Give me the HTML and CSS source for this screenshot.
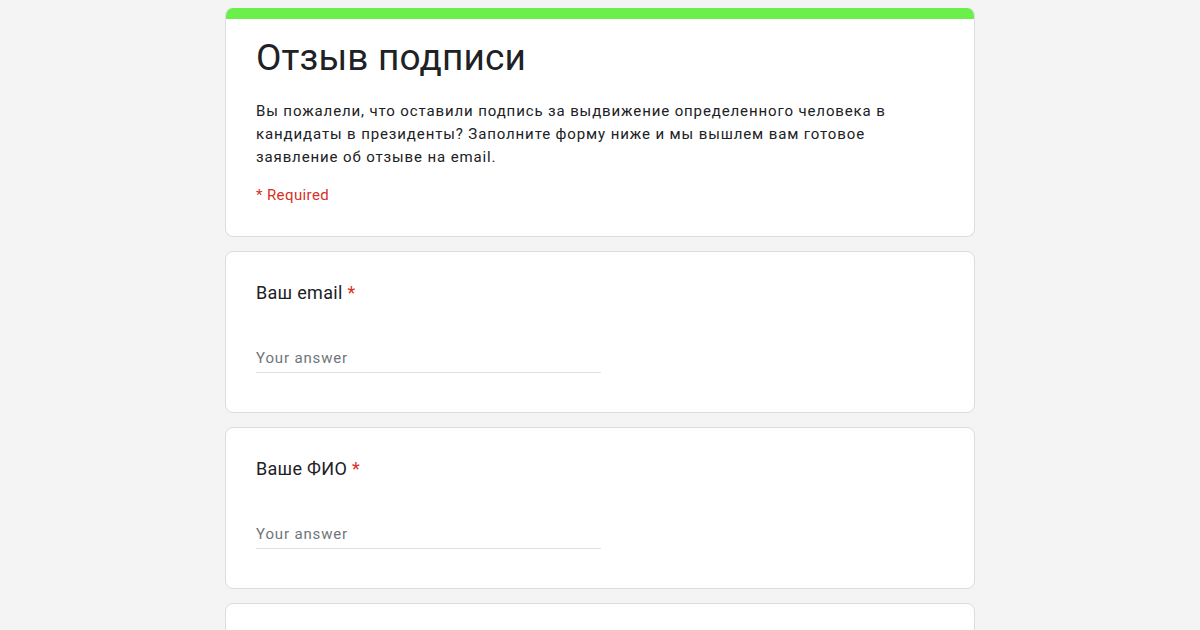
FILE: index.html
```html
<!DOCTYPE html>
<html lang="ru">
<head>
<meta charset="utf-8">
<title>Отзыв подписи</title>
<link rel="stylesheet" href="styles.css">
</head>
<body>
<main class="form">
  <section class="card header-card">
    <div class="accent"></div>
    <div class="header-body">
      <h1 class="title">Отзыв подписи</h1>
      <p class="desc">Вы пожалели, что оставили подпись за выдвижение определенного человека в кандидаты в президенты? Заполните форму ниже и мы вышлем вам готовое заявление об отзыве на email.</p>
      <div class="required-note">* Required</div>
    </div>
  </section>
  <section class="card question">
    <div class="label">Ваш email <span class="star">*</span></div>
    <div class="answer"><span class="placeholder">Your answer</span></div>
  </section>
  <section class="card question">
    <div class="label">Ваше ФИО <span class="star">*</span></div>
    <div class="answer"><span class="placeholder">Your answer</span></div>
  </section>
  <section class="card question"></section>
</main>
</body>
</html>
```

FILE: styles.css
```css
html, body {
  margin: 0;
  padding: 0;
  background: #f4f4f4;
  height: 100%;
  overflow: hidden;
}
body {
  font-family: Roboto, "Liberation Sans", Arial, sans-serif;
  color: #202124;
}
.form {
  width: 750px;
  margin: 0 auto;
  padding-top: 8px;
  display: flex;
  flex-direction: column;
  gap: 14px;
}
.card {
  background: #fff;
  border: 1px solid #dadce0;
  border-radius: 8px;
  overflow: hidden;
  box-sizing: border-box;
  flex-shrink: 0;
}
.header-card {
  border-top: none;
}
.accent {
  height: 11px;
  background: #6bef4b;
}
.header-body {
  padding: 15px 30px 29px;
}
.title {
  margin: 0;
  font-weight: 400;
  font-size: 37px;
  line-height: 48px;
  letter-spacing: 0.15px;
  color: #202124;
}
.desc {
  margin: 18px 0 0;
  font-size: 15px;
  line-height: 23px;
  letter-spacing: 0.88px;
  width: 670px;
  color: #202124;
}
.required-note {
  margin-top: 15px;
  font-size: 15px;
  line-height: 23px;
  letter-spacing: 0.4px;
  color: #d93025;
}
.question {
  padding: 29px 30px 38px;
  height: 162px;
}
.label {
  font-size: 18px;
  line-height: 24px;
  letter-spacing: 0.3px;
  color: #202124;
}
.star {
  color: #d93025;
}
.answer {
  margin-top: 41px;
  width: 345px;
  border-bottom: 1px solid #e0e0e0;
  padding-bottom: 2px;
}
.placeholder {
  display: block;
  font-size: 15px;
  line-height: 24px;
  letter-spacing: 0.85px;
  color: #70757a;
}
```
